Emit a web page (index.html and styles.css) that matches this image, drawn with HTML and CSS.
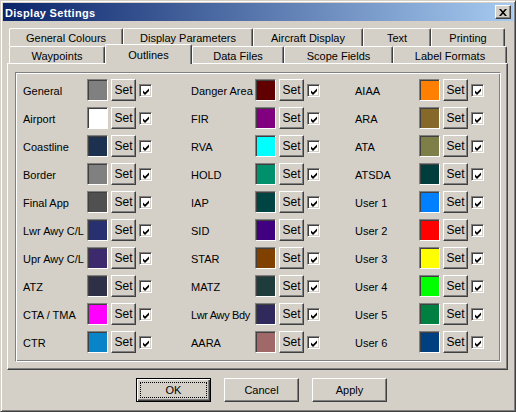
FILE: index.html
```html
<!DOCTYPE html>
<html>
<head>
<meta charset="utf-8">
<link rel="stylesheet" href="styles.css">
</head>
<body>
<div class="window">
  <div class="titlebar">
    <span class="title">Display Settings</span>
    <span class="close"><svg width="8" height="7" viewBox="0 0 8 7"><path d="M0 0h2l2 2.2L6 0h2L5 3.5 8 7H6L4 4.8 2 7H0l3-3.5z" fill="#000"/></svg></span>
  </div>
  <div class="body">
    <div class="tabs">
      <div class="tabrow back">
        <div class="tab w114">General Colours</div>
        <div class="tab w130">Display Parameters</div>
        <div class="tab w110">Aircraft Display</div>
        <div class="tab w68">Text</div>
        <div class="tab w74">Printing</div>
      </div>
      <div class="tabrow front">
        <div class="tab w96">Waypoints</div>
        <div class="tab w87 selected">Outlines</div>
        <div class="tab w92">Data Files</div>
        <div class="tab w109">Scope Fields</div>
        <div class="tab w114">Label Formats</div>
      </div>
    </div>
    <div class="panel">
      <div class="group">
        <div class="col c1">
          <div class="row"><span class="lbl">General</span><span class="sw" style="background:#808080"></span><span class="btn set">Set</span><span class="cb"><svg width="9" height="9" viewBox="0 0 9 9"><path d="M1 3.5l2 2 4-4v2.5l-4 4-2-2z" fill="#000"/></svg></span></div>
          <div class="row"><span class="lbl">Airport</span><span class="sw" style="background:#ffffff"></span><span class="btn set">Set</span><span class="cb"><svg width="9" height="9" viewBox="0 0 9 9"><path d="M1 3.5l2 2 4-4v2.5l-4 4-2-2z" fill="#000"/></svg></span></div>
          <div class="row"><span class="lbl">Coastline</span><span class="sw" style="background:#1c3050"></span><span class="btn set">Set</span><span class="cb"><svg width="9" height="9" viewBox="0 0 9 9"><path d="M1 3.5l2 2 4-4v2.5l-4 4-2-2z" fill="#000"/></svg></span></div>
          <div class="row"><span class="lbl">Border</span><span class="sw" style="background:#808080"></span><span class="btn set">Set</span><span class="cb"><svg width="9" height="9" viewBox="0 0 9 9"><path d="M1 3.5l2 2 4-4v2.5l-4 4-2-2z" fill="#000"/></svg></span></div>
          <div class="row"><span class="lbl">Final App</span><span class="sw" style="background:#505050"></span><span class="btn set">Set</span><span class="cb"><svg width="9" height="9" viewBox="0 0 9 9"><path d="M1 3.5l2 2 4-4v2.5l-4 4-2-2z" fill="#000"/></svg></span></div>
          <div class="row"><span class="lbl">Lwr Awy C/L</span><span class="sw" style="background:#283070"></span><span class="btn set">Set</span><span class="cb"><svg width="9" height="9" viewBox="0 0 9 9"><path d="M1 3.5l2 2 4-4v2.5l-4 4-2-2z" fill="#000"/></svg></span></div>
          <div class="row"><span class="lbl">Upr Awy C/L</span><span class="sw" style="background:#3c2a6c"></span><span class="btn set">Set</span><span class="cb"><svg width="9" height="9" viewBox="0 0 9 9"><path d="M1 3.5l2 2 4-4v2.5l-4 4-2-2z" fill="#000"/></svg></span></div>
          <div class="row"><span class="lbl">ATZ</span><span class="sw" style="background:#2e3048"></span><span class="btn set">Set</span><span class="cb"><svg width="9" height="9" viewBox="0 0 9 9"><path d="M1 3.5l2 2 4-4v2.5l-4 4-2-2z" fill="#000"/></svg></span></div>
          <div class="row"><span class="lbl">CTA / TMA</span><span class="sw" style="background:#ff00ff"></span><span class="btn set">Set</span><span class="cb"><svg width="9" height="9" viewBox="0 0 9 9"><path d="M1 3.5l2 2 4-4v2.5l-4 4-2-2z" fill="#000"/></svg></span></div>
          <div class="row"><span class="lbl">CTR</span><span class="sw" style="background:#0a84c8"></span><span class="btn set">Set</span><span class="cb"><svg width="9" height="9" viewBox="0 0 9 9"><path d="M1 3.5l2 2 4-4v2.5l-4 4-2-2z" fill="#000"/></svg></span></div>
        </div>
        <div class="col c2">
          <div class="row"><span class="lbl">Danger Area</span><span class="sw" style="background:#600000"></span><span class="btn set">Set</span><span class="cb"><svg width="9" height="9" viewBox="0 0 9 9"><path d="M1 3.5l2 2 4-4v2.5l-4 4-2-2z" fill="#000"/></svg></span></div>
          <div class="row"><span class="lbl">FIR</span><span class="sw" style="background:#800080"></span><span class="btn set">Set</span><span class="cb"><svg width="9" height="9" viewBox="0 0 9 9"><path d="M1 3.5l2 2 4-4v2.5l-4 4-2-2z" fill="#000"/></svg></span></div>
          <div class="row"><span class="lbl">RVA</span><span class="sw" style="background:#00ffff"></span><span class="btn set">Set</span><span class="cb"><svg width="9" height="9" viewBox="0 0 9 9"><path d="M1 3.5l2 2 4-4v2.5l-4 4-2-2z" fill="#000"/></svg></span></div>
          <div class="row"><span class="lbl">HOLD</span><span class="sw" style="background:#00906c"></span><span class="btn set">Set</span><span class="cb"><svg width="9" height="9" viewBox="0 0 9 9"><path d="M1 3.5l2 2 4-4v2.5l-4 4-2-2z" fill="#000"/></svg></span></div>
          <div class="row"><span class="lbl">IAP</span><span class="sw" style="background:#004444"></span><span class="btn set">Set</span><span class="cb"><svg width="9" height="9" viewBox="0 0 9 9"><path d="M1 3.5l2 2 4-4v2.5l-4 4-2-2z" fill="#000"/></svg></span></div>
          <div class="row"><span class="lbl">SID</span><span class="sw" style="background:#400080"></span><span class="btn set">Set</span><span class="cb"><svg width="9" height="9" viewBox="0 0 9 9"><path d="M1 3.5l2 2 4-4v2.5l-4 4-2-2z" fill="#000"/></svg></span></div>
          <div class="row"><span class="lbl">STAR</span><span class="sw" style="background:#804000"></span><span class="btn set">Set</span><span class="cb"><svg width="9" height="9" viewBox="0 0 9 9"><path d="M1 3.5l2 2 4-4v2.5l-4 4-2-2z" fill="#000"/></svg></span></div>
          <div class="row"><span class="lbl">MATZ</span><span class="sw" style="background:#1f3c3c"></span><span class="btn set">Set</span><span class="cb"><svg width="9" height="9" viewBox="0 0 9 9"><path d="M1 3.5l2 2 4-4v2.5l-4 4-2-2z" fill="#000"/></svg></span></div>
          <div class="row"><span class="lbl tight">Lwr Awy Bdy</span><span class="sw" style="background:#302a5c"></span><span class="btn set">Set</span><span class="cb"><svg width="9" height="9" viewBox="0 0 9 9"><path d="M1 3.5l2 2 4-4v2.5l-4 4-2-2z" fill="#000"/></svg></span></div>
          <div class="row"><span class="lbl">AARA</span><span class="sw" style="background:#a06868"></span><span class="btn set">Set</span><span class="cb"><svg width="9" height="9" viewBox="0 0 9 9"><path d="M1 3.5l2 2 4-4v2.5l-4 4-2-2z" fill="#000"/></svg></span></div>
        </div>
        <div class="col c3">
          <div class="row"><span class="lbl">AIAA</span><span class="sw" style="background:#ff8000"></span><span class="btn set">Set</span><span class="cb"><svg width="9" height="9" viewBox="0 0 9 9"><path d="M1 3.5l2 2 4-4v2.5l-4 4-2-2z" fill="#000"/></svg></span></div>
          <div class="row"><span class="lbl">ARA</span><span class="sw" style="background:#86682a"></span><span class="btn set">Set</span><span class="cb"><svg width="9" height="9" viewBox="0 0 9 9"><path d="M1 3.5l2 2 4-4v2.5l-4 4-2-2z" fill="#000"/></svg></span></div>
          <div class="row"><span class="lbl">ATA</span><span class="sw" style="background:#7e7e48"></span><span class="btn set">Set</span><span class="cb"><svg width="9" height="9" viewBox="0 0 9 9"><path d="M1 3.5l2 2 4-4v2.5l-4 4-2-2z" fill="#000"/></svg></span></div>
          <div class="row"><span class="lbl">ATSDA</span><span class="sw" style="background:#003e3e"></span><span class="btn set">Set</span><span class="cb"><svg width="9" height="9" viewBox="0 0 9 9"><path d="M1 3.5l2 2 4-4v2.5l-4 4-2-2z" fill="#000"/></svg></span></div>
          <div class="row"><span class="lbl">User 1</span><span class="sw" style="background:#0080ff"></span><span class="btn set">Set</span><span class="cb"><svg width="9" height="9" viewBox="0 0 9 9"><path d="M1 3.5l2 2 4-4v2.5l-4 4-2-2z" fill="#000"/></svg></span></div>
          <div class="row"><span class="lbl">User 2</span><span class="sw" style="background:#ff0000"></span><span class="btn set">Set</span><span class="cb"><svg width="9" height="9" viewBox="0 0 9 9"><path d="M1 3.5l2 2 4-4v2.5l-4 4-2-2z" fill="#000"/></svg></span></div>
          <div class="row"><span class="lbl">User 3</span><span class="sw" style="background:#ffff00"></span><span class="btn set">Set</span><span class="cb"><svg width="9" height="9" viewBox="0 0 9 9"><path d="M1 3.5l2 2 4-4v2.5l-4 4-2-2z" fill="#000"/></svg></span></div>
          <div class="row"><span class="lbl">User 4</span><span class="sw" style="background:#00ff00"></span><span class="btn set">Set</span><span class="cb"><svg width="9" height="9" viewBox="0 0 9 9"><path d="M1 3.5l2 2 4-4v2.5l-4 4-2-2z" fill="#000"/></svg></span></div>
          <div class="row"><span class="lbl">User 5</span><span class="sw" style="background:#008040"></span><span class="btn set">Set</span><span class="cb"><svg width="9" height="9" viewBox="0 0 9 9"><path d="M1 3.5l2 2 4-4v2.5l-4 4-2-2z" fill="#000"/></svg></span></div>
          <div class="row"><span class="lbl">User 6</span><span class="sw" style="background:#004080"></span><span class="btn set">Set</span><span class="cb"><svg width="9" height="9" viewBox="0 0 9 9"><path d="M1 3.5l2 2 4-4v2.5l-4 4-2-2z" fill="#000"/></svg></span></div>
        </div>
      </div>
    </div>
    <div class="buttons">
      <span class="btn big default"><span class="focus">OK</span></span>
      <span class="btn big">Cancel</span>
      <span class="btn big">Apply</span>
    </div>
  </div>
</div>
</body>
</html>
```
FILE: styles.css
```css
html, body {
  margin: 0;
  padding: 0;
  background: #d4d0c8;
}
body {
  font-family: "Liberation Sans", Arial, sans-serif;
  font-size: 11px;
  color: #000;
}
.window {
  box-sizing: border-box;
  width: 516px;
  height: 412px;
  border: 1px solid;
  border-color: #d4d0c8 #404040 #404040 #d4d0c8;
  box-shadow: inset 1px 1px #fff, inset -1px -1px #808080;
  padding: 2px;
  background: #d4d0c8;
  display: flex;
  flex-direction: column;
}
.titlebar {
  height: 18px;
  background: linear-gradient(to right, #0a246a, #a6caf0);
  display: flex;
  align-items: center;
  justify-content: space-between;
  padding: 0 2px 0 2px;
}
.title {
  color: #fff;
  font-weight: bold;
  font-size: 11px;
  letter-spacing: 0.3px;
  padding-top: 1px;
}
.close {
  box-sizing: border-box;
  width: 16px;
  height: 14px;
  background: #d4d0c8;
  border: 1px solid;
  border-color: #fff #404040 #404040 #fff;
  box-shadow: inset -1px -1px #808080;
  display: flex;
  align-items: center;
  justify-content: center;
}
.close svg { display: block; }
.body {
  padding: 7px 5px 0 4px;
  display: flex;
  flex-direction: column;
}
.tabs {
  height: 35px;
  display: flex;
  flex-direction: column;
  padding-left: 2px;
}
.tabrow {
  display: flex;
}
.back { height: 18px; }
.front { height: 17px; }
.tab {
  box-sizing: border-box;
  flex: none;
  border-top: 1px solid #fff;
  border-left: 1px solid #fff;
  border-right: 1px solid #404040;
  border-radius: 2px 2px 0 0;
  box-shadow: inset -1px 0 #808080;
  background: #d4d0c8;
  display: flex;
  justify-content: center;
  align-items: center;
  white-space: nowrap;
}
.back .tab { height: 18px; padding-top: 1px; }
.front .tab { height: 17px; padding-top: 2px; }
.front .tab.selected {
  position: relative;
  z-index: 1;
  height: 20px;
  margin-top: -2px;
  padding-top: 0;
}
.w68 { width: 68px; }
.w74 { width: 74px; }
.w87 { width: 87px; }
.w92 { width: 92px; }
.w96 { width: 96px; }
.w109 { width: 109px; }
.w110 { width: 110px; }
.w114 { width: 114px; }
.w130 { width: 130px; }
.panel {
  box-sizing: border-box;
  height: 307px;
  border: 1px solid;
  border-color: #fff #404040 #404040 #fff;
  box-shadow: inset -1px -1px #808080;
  padding: 8px 6px 7px 7px;
  display: flex;
}
.group {
  flex: 1;
  box-sizing: border-box;
  border: 1px solid;
  border-color: #808080 #fff #fff #808080;
  box-shadow: inset 1px 1px #fff, inset -1px -1px #808080;
  padding: 6px 0 0 7px;
  display: flex;
}
.col {
  display: flex;
  flex-direction: column;
  gap: 6px;
}
.c1 { width: 168px; }
.c2 { width: 164px; }
.row {
  display: flex;
  align-items: center;
  height: 22px;
}
.lbl {
  width: 64px;
  white-space: nowrap;
  padding-top: 1px;
}
.lbl.tight {
  letter-spacing: -0.35px;
}
.sw {
  box-sizing: border-box;
  width: 21px;
  height: 22px;
  border: 1px solid;
  border-color: #808080 #fff #fff #808080;
  box-shadow: inset 1px 1px #404040;
}
.btn {
  box-sizing: border-box;
  border: 1px solid;
  border-color: #fff #404040 #404040 #fff;
  box-shadow: inset -1px -1px #808080;
  background: #d4d0c8;
  display: flex;
  align-items: center;
  justify-content: center;
}
.set {
  width: 25px;
  height: 22px;
  margin-left: 3px;
  padding-bottom: 1px;
  font-size: 12px;
}
.cb {
  box-sizing: border-box;
  width: 13px;
  height: 13px;
  margin-left: 3px;
  margin-top: 1px;
  background: #fff;
  border: 1px solid;
  border-color: #808080 #fff #fff #808080;
  box-shadow: inset 1px 1px #404040, inset -1px -1px #d4d0c8;
  display: flex;
  align-items: center;
  justify-content: center;
  padding: 1px 0 0 1px;
}
.cb svg { display: block; }
.buttons {
  display: flex;
  justify-content: center;
  gap: 13px;
  margin-top: 8px;
  padding-left: 8px;
}
.big {
  width: 75px;
  height: 24px;
}
.default {
  border: 1px solid #000;
  box-shadow: inset 1px 1px #fff, inset -1px -1px #404040, inset -2px -2px #808080;
  padding: 3px;
  align-items: stretch;
}
.focus {
  flex: 1;
  border: 1px dotted #000;
  display: flex;
  align-items: center;
  justify-content: center;
}
```
